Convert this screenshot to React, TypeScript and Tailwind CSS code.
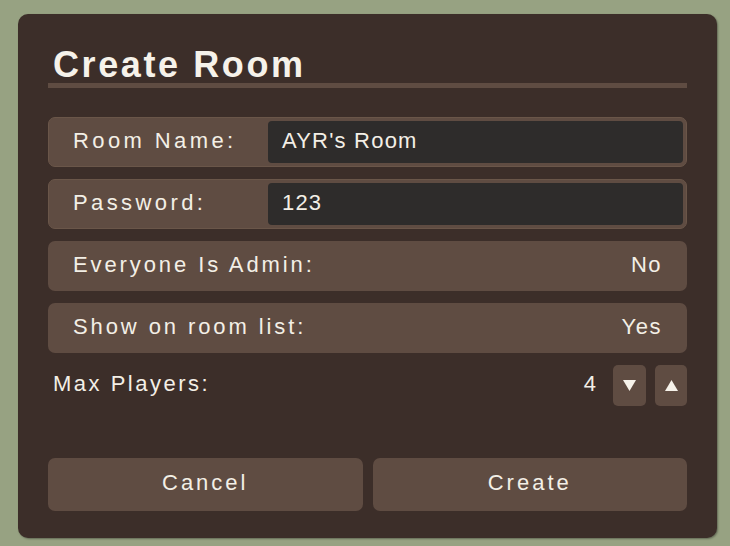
import React from "react";

const font = { fontFamily: '"Liberation Sans", Arial, sans-serif' };

function InputRow({ label, value }: { label: string; value: string }) {
  return (
    <div className="flex h-[50px] items-stretch rounded-[7px] border border-[#6a5649] bg-[#5f4c42] p-[3px]">
      <span className="flex w-[216px] shrink-0 items-center pb-[3px] pl-[21px] text-[22px] leading-none tracking-[3.4px] text-[#f3efe6]">
        {label}
      </span>
      <div className="flex flex-1 items-center rounded-[4px] bg-[#2e2c2b] pb-[3px] pl-[14px] text-[22px] leading-none tracking-[1.2px] text-[#f3efe6]">
        {value}
      </div>
    </div>
  );
}

function ToggleRow({ label, value }: { label: string; value: string }) {
  return (
    <div className="flex h-[50px] items-center justify-between rounded-[7px] bg-[#5f4c42] pb-[3px] pl-[25px] pr-[25px] text-[22px] leading-none text-[#f3efe6]">
      <span className="tracking-[2.9px]">{label}</span>
      <span className="tracking-[1.5px]">{value}</span>
    </div>
  );
}

export default function App() {
  return (
    <div className="flex h-[546px] w-[730px] items-start bg-[#97a282] pl-[18px] pt-[14px]" style={font}>
      <div className="flex h-[524px] w-[699px] flex-col rounded-[10px] bg-[#3c2e29] px-[30px] pb-[27px] pt-[33px] shadow-[1px_1px_2px_rgba(0,0,0,0.35)]">
        <div className="h-[36px] pl-[5px] text-[36px] font-bold leading-none tracking-[2.6px] text-[#f6f2ea]">
          Create Room
        </div>
        <div className="h-[5px] bg-[#5f4c42]" />

        <div className="mt-[29px] flex flex-col gap-[12px]">
          <InputRow label="Room Name:" value="AYR's Room" />
          <InputRow label="Password:" value="123" />
          <ToggleRow label="Everyone Is Admin:" value="No" />
          <ToggleRow label="Show on room list:" value="Yes" />
        </div>

        <div className="mt-[12px] flex h-[41px] items-center">
          <span className="pb-[3px] pl-[5px] text-[22px] leading-none tracking-[2.5px] text-[#f3efe6]">Max Players:</span>
          <span className="ml-auto mr-[17px] pb-[3px] text-[22px] leading-none text-[#f3efe6]">4</span>
          <button className="flex h-[41px] w-[33px] items-center justify-center rounded-[5px] bg-[#5f4c42]">
            <svg width="13" height="11" viewBox="0 0 13 11">
              <polygon points="0,0 13,0 6.5,11" fill="#f6f2ea" />
            </svg>
          </button>
          <button className="ml-[9px] flex h-[41px] w-[32px] items-center justify-center rounded-[5px] bg-[#5f4c42]">
            <svg width="13" height="11" viewBox="0 0 13 11">
              <polygon points="6.5,0 13,11 0,11" fill="#f6f2ea" />
            </svg>
          </button>
        </div>

        <div className="mt-auto flex gap-[10px]">
          <button className="flex h-[53px] flex-1 items-center justify-center rounded-[7px] bg-[#5f4c42] pb-[4px] text-[22px] leading-none tracking-[3px] text-[#f3efe6]">
            Cancel
          </button>
          <button className="flex h-[53px] flex-1 items-center justify-center rounded-[7px] bg-[#5f4c42] pb-[4px] text-[22px] leading-none tracking-[3px] text-[#f3efe6]">
            Create
          </button>
        </div>
      </div>
    </div>
  );
}
